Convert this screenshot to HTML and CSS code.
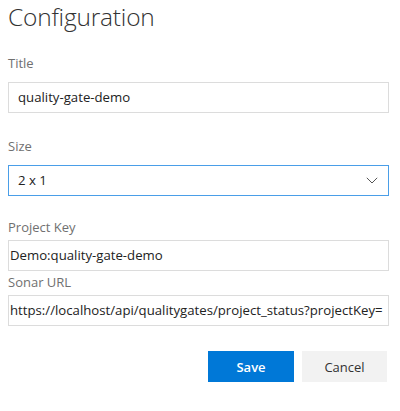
FILE: index.html
```html
<!DOCTYPE html>
<html>
<head>
<meta charset="utf-8">
<link rel="stylesheet" href="styles.css">
</head>
<body>
<div class="config">
  <h1 class="heading">Configuration</h1>
  <div class="field field-title">
    <label class="label">Title</label>
    <div class="input pad-wide">quality-gate-demo</div>
  </div>
  <div class="field field-size">
    <label class="label">Size</label>
    <div class="input select pad-wide">
      <span>2 x 1</span>
      <svg class="chevron" width="12" height="7" viewBox="0 0 12 7"><path d="M0.8 0.8 L6 6 L11.2 0.8" fill="none" stroke="#555" stroke-width="1"/></svg>
    </div>
  </div>
  <div class="field field-key">
    <label class="label">Project Key</label>
    <div class="input pad-narrow">Demo:quality-gate-demo</div>
  </div>
  <div class="field field-url">
    <label class="label">Sonar URL</label>
    <div class="input pad-narrow">https://localhost/api/qualitygates/project_status?projectKey=</div>
  </div>
  <div class="actions">
    <button class="btn btn-primary">Save</button>
    <button class="btn btn-secondary">Cancel</button>
  </div>
</div>
</body>
</html>
```
FILE: styles.css
```css
html, body {
  margin: 0;
  padding: 0;
  background: #ffffff;
}
body {
  font-family: "Open Sans", "Noto Sans", sans-serif;
  color: #333333;
}
.config {
  width: 381px;
  padding: 0 0 0 8px;
  display: flex;
  flex-direction: column;
}
.heading {
  margin: 0;
  font-size: 24.5px;
  font-weight: 300;
  line-height: 34px;
  color: #333333;
  letter-spacing: -0.2px;
}
.field {
  display: flex;
  flex-direction: column;
}
.field-title { margin-top: 20px; }
.field-size { margin-top: 24px; }
.field-key { margin-top: 22px; }
.field-url { margin-top: 2px; }
.label {
  font-size: 13px;
  line-height: 18px;
  color: #707070;
  margin-bottom: 10px;
}
.field-key .label, .field-url .label { margin-bottom: 4px; }
.input {
  box-sizing: border-box;
  height: 31px;
  border: 1px solid #dcdcdc;
  font-size: 13.2px;
  line-height: 29px;
  color: #222222;
  white-space: nowrap;
  overflow: hidden;
}
.pad-wide { padding: 0 9px; }
.pad-narrow { padding: 0 1px; }
.select {
  border-color: #4a9ee8;
  display: flex;
  justify-content: space-between;
  align-items: center;
}
.chevron { margin-right: 1px; }
.actions {
  display: flex;
  justify-content: flex-end;
  gap: 8px;
  margin-top: 25px;
  padding-right: 2px;
}
.btn {
  box-sizing: border-box;
  width: 86px;
  height: 31px;
  border: none;
  font-family: "Open Sans", "Noto Sans", sans-serif;
  font-size: 13px;
  font-weight: 600;
  padding: 0;
}
.btn-primary {
  background: #0078d7;
  color: #ffffff;
}
.btn-secondary {
  background: #f2f2f2;
  color: #333333;
  font-weight: 500;
  width: 85px;
}
```
